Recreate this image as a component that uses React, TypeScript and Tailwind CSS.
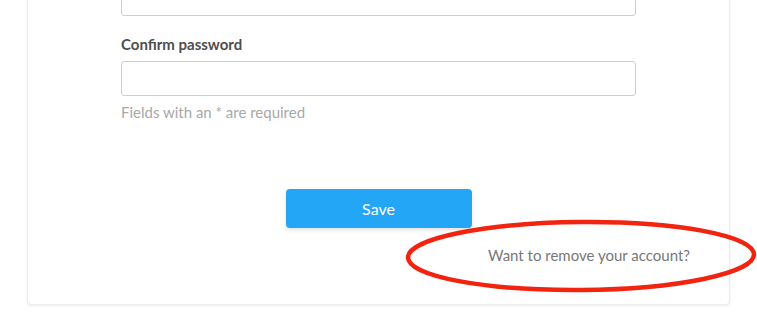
export default function App() {
  return (
    <div className="relative h-[328px] w-[757px] overflow-hidden bg-white font-['Lato','Liberation_Sans',sans-serif]">
      {/* Card */}
      <div className="ml-[27px] mt-[-40px] w-[703px] rounded-[4px] border border-[#ececec] bg-white pb-[39px] pt-[20px] shadow-[0_1px_3px_rgba(0,0,0,0.08)]">
        <div className="mx-[93px] w-[515px]">
          <input
            type="password"
            className="block h-[35px] w-full rounded-[3px] border border-[#cfcfcf] bg-white outline-none"
          />
          <label className="mt-[18px] mb-[7px] block text-[15px] font-bold leading-[20px] text-[#4e4e4e]">
            Confirm password
          </label>
          <input
            type="password"
            className="block h-[35px] w-full rounded-[3px] border border-[#cfcfcf] bg-white outline-none"
          />
          <p className="mt-[6px] text-[15px] leading-[20px] text-[#a8a8a8]">
            Fields with an * are required
          </p>
        </div>

        <div className="mt-[67px] flex justify-center">
          <button className="h-[39px] w-[186px] rounded-[4px] bg-[#24a6f7] text-[16px] leading-[20px] text-white shadow-[0_2px_4px_rgba(0,0,0,0.12)]">
            Save
          </button>
        </div>

        <div className="mt-[17px] flex justify-end pr-[39px]">
          <a className="cursor-pointer text-[15px] leading-[20px] text-[#777777]">
            Want to remove your account?
          </a>
        </div>
      </div>

      {/* Red annotation ellipse */}
      <svg
        className="pointer-events-none absolute left-0 top-0"
        width="757"
        height="328"
        viewBox="0 0 757 328"
      >
        <ellipse
          cx="581"
          cy="256"
          rx="173"
          ry="34"
          fill="none"
          stroke="#f2230f"
          strokeWidth="4.5"
          transform="rotate(-0.5 581 256)"
        />
      </svg>
    </div>
  );
}
